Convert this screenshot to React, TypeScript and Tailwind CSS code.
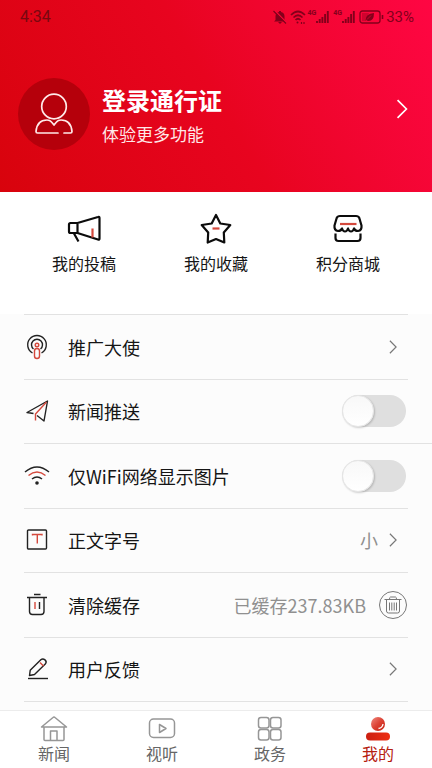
import { useState, type ReactNode } from "react";

function StatusBar() {
  return (
    <div className="flex h-8 items-center justify-between pt-[2px] pr-[18px] pl-5 text-[#83001b]">
      <span className="font-[Roboto] text-base text-[#780810]">4:34</span>
      <div className="flex items-center">
        <svg width="14" height="14" viewBox="0 0 14 14" className="mr-[3px]">
          <path d="M2.500 10V6a4.500 4.500 0 0 1 3.500-4V1h2v1a4.500 4.500 0 0 1 3.500 4v4l1.500 1.500H1zM5 12h4L7 14z" fill="currentColor" />
          <path d="M1.500 .5l12 12" stroke="#fa0638" strokeWidth="1.500" />
          <path d="M.5 1l12.500 12.500" stroke="currentColor" strokeWidth="1.300" />
        </svg>
        <svg width="16" height="14" viewBox="0 0 16 14" fill="none" stroke="currentColor" strokeWidth="1.700" className="mr-[2px]">
          <path d="M1 5q7-7 14 0M3.500 7.500q4.500-4.500 9 0M5.500 10q2.500-2.500 5 0" />
          <circle cx="7.500" cy="12.500" r="1" fill="currentColor" stroke="none" />
          <path d="M11.500 12v2M14 12v2" strokeWidth="1.200" />
        </svg>
        <Signal />
        <Signal />
        <svg width="25" height="14" viewBox="0 0 25 14" className="mr-[2px]">
          <rect x="1" y="1" width="20" height="12" rx="2.500" fill="none" stroke="currentColor" strokeWidth="1.300" />
          <path d="M3 3h7L7 11H3z" fill="currentColor" opacity=".35" />
          <path d="M23.500 5v4" stroke="currentColor" strokeWidth="1.600" />
          <path d="M6.500 10.500q0-7 8.500-7.500 0 8-5.500 8-1.500 0-2-1z" fill="currentColor" />
          <path d="M8 9.500l4-4" stroke="#fa0638" strokeWidth=".6" />
        </svg>
        <span className="font-[Roboto] text-[15px]">33%</span>
      </div>
    </div>
  );
}

function Signal() {
  return (
    <span className="mr-1 flex items-start">
      <span className="font-[Roboto] text-[7px] leading-[7px] font-bold">4G</span>
      <svg width="13" height="14" viewBox="0 0 13 14" stroke="currentColor" strokeWidth="1.900">
        <path d="M1 11v2M3.700 9v4M6.400 7v6M9.100 4v9M11.800 1v12" />
      </svg>
    </span>
  );
}

function Chevron({ className }: { className: string }) {
  return (
    <svg viewBox="0 0 10 18" fill="none" stroke="currentColor" className={className}>
      <path d="M1 1l8 8-8 8" strokeWidth="1.500" />
    </svg>
  );
}

const quickLinks = [
  {
    label: "我的投稿",
    icon: (
      <>
        <path d="M11.500 10v10M11.500 10L32 4q1.500-.5 1.500 1v20.500q0 1.500-1.500 1L11.500 20H4.500q-1.500 0-1.500-1.500v-7Q3 10 4.500 10zM8 20.500l4.500 8" />
        <path d="M26.500 15.500v9" stroke="#d4493d" />
      </>
    ),
  },
  {
    label: "我的收藏",
    icon: (
      <>
        <path d="M18 2l4.300 8.500 10 1.500-6.500 7.500.5 10-8.300-3.500-8.300 3.500.5-10L3.700 12l10-1.500z" />
        <path d="M14.500 15.500h7" stroke="#d4493d" />
      </>
    ),
  },
  {
    label: "积分商城",
    icon: (
      <>
        <path d="M10 3h16q2.500 0 3.300 2L31.500 12.500q.5 5-3.500 5.500-3 0-4-2.500-1 3-3 3t-3-3q-1 3-3 3t-3-3q-1 2.500-4 2.500-4-.5-3.500-5.500L6.700 5Q7.500 3 10 3z" />
        <path d="M5.500 20.500v4.500q0 3 3 3h19q3 0 3-3v-4.500" />
        <path d="M10 11h16.500" stroke="#d4493d" />
      </>
    ),
  },
];

function QuickLinks() {
  return (
    <div className="grid h-[122px] grid-cols-3 items-start bg-white px-[18px] pt-[21px]">
      {quickLinks.map((item) => (
        <a key={item.label} href="#" className="flex flex-col items-center gap-0.5">
          <svg
            width="36"
            height="32"
            viewBox="0 0 36 32"
            fill="none"
            stroke="#0c0c0c"
            strokeWidth="2.200"
            strokeLinejoin="round"
          >
            {item.icon}
          </svg>
          <span className="text-base leading-8 text-[#151515]">{item.label}</span>
        </a>
      ))}
    </div>
  );
}

function RowIcon({ children }: { children: ReactNode }) {
  return (
    <svg width="26" height="26" viewBox="0 0 26 26" fill="none" stroke="#222" strokeWidth="1.400" className="mr-[18px] shrink-0">
      {children}
    </svg>
  );
}

function Row({ icon, label, wide, children }: { icon: ReactNode; label: ReactNode; wide?: boolean; children: ReactNode }) {
  return (
    <li className={`flex min-h-16 items-center border-b border-[#e2e2e2] ${wide ? "pr-6" : "mr-6"}`}>
      <RowIcon>{icon}</RowIcon>
      <span className="flex-1 text-lg text-[#151515]">{label}</span>
      {children}
    </li>
  );
}

function Toggle({ id }: { id: string }) {
  const [on, setOn] = useState(false);
  return (
    <input
      id={id}
      type="checkbox"
      role="switch"
      checked={on}
      onChange={() => setOn(!on)}
      className="mr-[2px] h-8 w-16 appearance-none rounded-full bg-[#dfdfdf] before:block before:size-8 before:rounded-full before:border before:border-[#e6e6e6] before:bg-linear-to-b before:from-[#f8f8f8] before:to-white before:shadow-[1px_1px_2px_rgba(0,0,0,0.18)] checked:bg-[#e5041b] checked:before:translate-x-8"
    />
  );
}

function SettingsList() {
  const red = "#d4493d";
  return (
    <main className="flex flex-1 flex-col pb-2 pl-6">
      <hr className="mr-6 border-[#e2e2e2]" />
      <ul className="grid flex-1 auto-rows-fr">
        <Row
          label={<a href="#">推广大使</a>}
          icon={
            <>
              <path d="M8.500 19a9.300 9.300 0 1 1 9 0" />
              <path d="M9.500 15a5.500 5.500 0 1 1 7 0" />
              <circle cx="13" cy="11" r="1.800" stroke={red} />
              <rect x="10.500" y="14.500" width="5" height="10" rx="2.500" stroke={red} />
            </>
          }
        >
          <Chevron className="mr-[11px] h-[14px] w-2 text-[#777]" />
        </Row>
        <Row
          wide
          label={<label htmlFor="push">新闻推送</label>}
          icon={
            <>
              <path d="M9.500 15.500L3 14.500 23.500 3 20 23l-7-5.500" strokeLinejoin="round" />
              <path d="M22.500 4L11.500 16v6.500" stroke={red} />
            </>
          }
        >
          <Toggle id="push" />
        </Row>
        <Row
          label={<label htmlFor="wifi">仅WiFi网络显示图片</label>}
          icon={
            <>
              <path d="M1 9q12-10 24 0M8 16q5-4 10 0" strokeWidth="1.500" />
              <path d="M4.500 12.500q8.500-7 17 0" stroke={red} strokeWidth="1.500" />
              <circle cx="13" cy="20" r="1.800" fill="#222" stroke="none" />
            </>
          }
        >
          <Toggle id="wifi" />
        </Row>
        <Row
          label={<a href="#">正文字号</a>}
          icon={
            <>
              <rect x="3.500" y="3" width="19" height="19" rx="1" />
              <path d="M8.500 8.500v-1h9.500v1M13.300 7.500v9" stroke={red} />
            </>
          }
        >
          <span className="mr-[11px] text-lg text-[#909090]">小</span>
          <Chevron className="mr-[11px] h-[14px] w-2 text-[#777]" />
        </Row>
        <Row
          label="清除缓存"
          icon={
            <>
              <path d="M3 5.500h20M10 2.500h6.500M5.500 5.500v14q0 3 3 3h8.500q3 0 3-3v-14M15.500 10v7" />
              <path d="M11 10v7" stroke={red} />
            </>
          }
        >
          <span className="mr-3 text-lg text-[#909090]">已缓存237.83KB</span>
          <button type="button" aria-label="清除缓存" className="text-[#777]">
            <svg width="30" height="30" viewBox="0 0 30 30" fill="none" stroke="currentColor">
              <circle cx="15" cy="15" r="13.500" />
              <path d="M6.500 9.500h17M11.500 9.500q0-2.500 1-2.500h5q1 0 1 2.500M8.500 9.500v11.500q0 2 2 2h9q2 0 2-2V9.500M11.500 12.500v8M13.800 12.500v8M16.200 12.500v8M18.500 12.500v8" />
            </svg>
          </button>
        </Row>
        <Row
          label={<a href="#">用户反馈</a>}
          icon={
            <>
              <path d="M4 22.500h20" />
              <path d="M5.500 19.500l.7-5.200L16.800 3.800q2-1.800 4.200.1t.3 4.200L10.500 18.500z" strokeLinejoin="round" />
              <path d="M16 6.500l3.500 3.500" stroke={red} />
            </>
          }
        >
          <Chevron className="mr-[11px] h-[14px] w-2 text-[#777]" />
        </Row>
      </ul>
    </main>
  );
}

const tabs = [
  {
    label: "新闻",
    icon: <path d="M5 12v12.500q0 1 1 1h18q1 0 1-1V12H2.500L14 2.500q1-1 2 0L27.500 12H25M11.500 25.500V16h6.500v9.500" />,
  },
  {
    label: "视听",
    icon: (
      <>
        <rect x="2.500" y="4" width="25" height="18.500" rx="4" />
        <path d="M12.500 9.500v8l6.500-4z" />
      </>
    ),
  },
  {
    label: "政务",
    icon: (
      <>
        <rect x="3.500" y="2.500" width="10.500" height="10.500" rx="2.500" />
        <rect x="15.500" y="2.500" width="10.500" height="10.500" rx="2.500" />
        <rect x="3.500" y="14.500" width="10.500" height="10.500" rx="2.500" />
        <rect x="15.500" y="14.500" width="10.500" height="10.500" rx="2.500" />
      </>
    ),
  },
  {
    label: "我的",
    active: true,
    icon: (
      <g stroke="none">
        <defs>
          <linearGradient id="head" x1="0" y1="0" x2="1" y2="1">
            <stop offset="0" stopColor="#f08a80" />
            <stop offset=".5" stopColor="#dc4335" />
            <stop offset="1" stopColor="#c51d0d" />
          </linearGradient>
          <linearGradient id="body">
            <stop offset="0" stopColor="#cb1f12" />
            <stop offset="1" stopColor="#ee2f12" />
          </linearGradient>
        </defs>
        <circle cx="15" cy="9" r="7" fill="url(#head)" />
        <path d="M15.500 13.500q4-.5 4.500-4.500" fill="none" stroke="#fff" strokeWidth="1.300" />
        <rect x="3" y="17.500" width="24" height="8" rx="4" fill="url(#body)" />
      </g>
    ),
  },
];

function TabBar() {
  return (
    <nav className="sticky bottom-0 grid h-[58px] grid-cols-4 border-t border-[#ececec] bg-white pt-1">
      {tabs.map((tab) => (
        <a key={tab.label} href="#" className="flex flex-col items-center">
          <svg width="30" height="28" viewBox="0 0 30 28" fill="none" stroke="#969696" strokeWidth="1.500" strokeLinejoin="round">
            {tab.icon}
          </svg>
          <span className={`text-base leading-5 ${tab.active ? "text-[#b5200f]" : "text-[#666]"}`}>{tab.label}</span>
        </a>
      ))}
    </nav>
  );
}

export default function App() {
  return (
    <div className="flex min-h-screen flex-col bg-[#fcfcfc] font-['Noto_Sans_CJK_SC',sans-serif]">
      <header className="h-48 bg-linear-60 from-[#d8030c] via-[#e8041f] to-[#ff0643] text-white">
        <StatusBar />
        <a href="#" className="mt-[46px] flex items-center pr-6 pl-[18px]">
          <span className="flex size-[72px] shrink-0 items-center justify-center rounded-full bg-[#b5000b]">
            <svg width="40" height="44" viewBox="0 0 40 44" fill="none" stroke="#ffe9e9" strokeWidth="1.700" strokeLinecap="round" strokeLinejoin="round">
              <circle cx="20" cy="14.500" r="12.300" />
              <path d="M24 41H3.500Q2 41 2 39.500 3 28 13 28q3 0 4.500 2l2.500 3 2.500-3q1.500-2 4.500-2 10 0 11 11.500 0 1.500-1.500 1.500H30" />
            </svg>
          </span>
          <span className="ml-3 flex flex-1 flex-col pt-1">
            <span className="text-2xl leading-9 font-bold">登录通行证</span>
            <span className="text-[17px] leading-8 text-[#ffe8e8]">体验更多功能</span>
          </span>
          <Chevron className="mb-2.5 h-5 w-3" />
        </a>
      </header>
      <QuickLinks />
      <SettingsList />
      <TabBar />
    </div>
  );
}
